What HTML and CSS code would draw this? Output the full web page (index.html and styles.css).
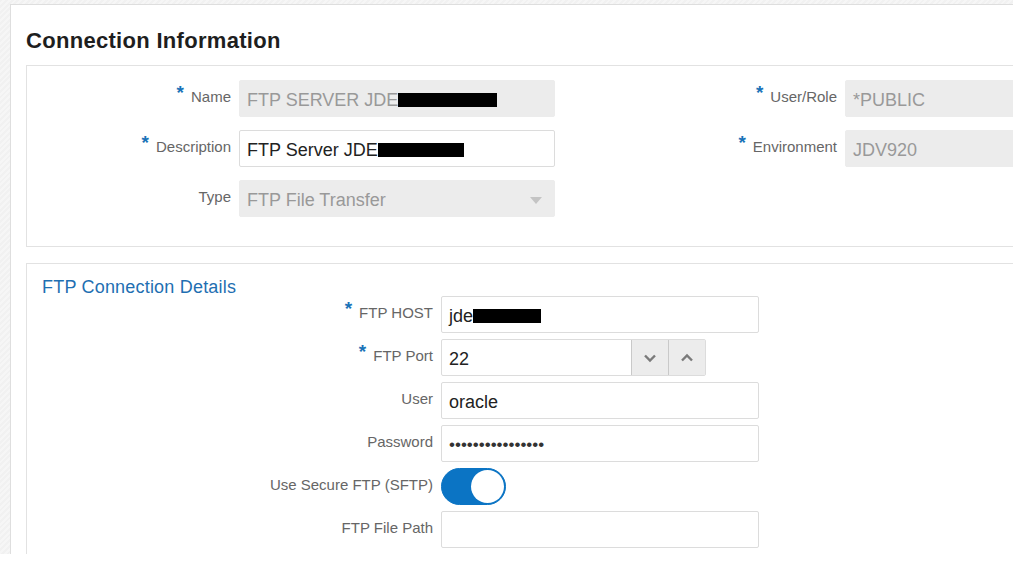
FILE: index.html
```html
<!DOCTYPE html>
<html>
<head>
<meta charset="utf-8">
<link rel="stylesheet" href="styles.css">
</head>
<body>
<div class="frame">
  <div class="outer">
    <h1 class="title">Connection Information</h1>
    <section class="panel panel-info">
      <div class="col col-left">
        <div class="row">
          <label class="lbl"><span class="req">*</span>Name</label>
          <div class="field ro">FTP SERVER JDE<span class="redact r1"></span></div>
        </div>
        <div class="row">
          <label class="lbl"><span class="req">*</span>Description</label>
          <div class="field">FTP Server JDE<span class="redact r2"></span></div>
        </div>
        <div class="row">
          <label class="lbl">Type</label>
          <div class="field ro select">FTP File Transfer<span class="caret"></span></div>
        </div>
      </div>
      <div class="col col-right">
        <div class="row">
          <label class="lbl"><span class="req">*</span>User/Role</label>
          <div class="field ro">*PUBLIC</div>
        </div>
        <div class="row">
          <label class="lbl"><span class="req">*</span>Environment</label>
          <div class="field ro">JDV920</div>
        </div>
      </div>
    </section>
    <section class="panel panel-ftp">
      <h2 class="sub">FTP Connection Details</h2>
      <div class="form">
        <div class="row">
          <label class="lbl"><span class="req">*</span>FTP HOST</label>
          <div class="field">jde<span class="redact r3"></span></div>
        </div>
        <div class="row">
          <label class="lbl"><span class="req">*</span>FTP Port</label>
          <div class="spin">
            <div class="spin-val">22</div>
            <div class="spin-btn">
              <svg width="14" height="10" viewBox="0 0 14 10"><path d="M2 2.5 L7 7.5 L12 2.5" fill="none" stroke="#7a7a7a" stroke-width="2.4"/></svg>
            </div>
            <div class="spin-btn">
              <svg width="14" height="10" viewBox="0 0 14 10"><path d="M2 7.5 L7 2.5 L12 7.5" fill="none" stroke="#7a7a7a" stroke-width="2.4"/></svg>
            </div>
          </div>
        </div>
        <div class="row">
          <label class="lbl">User</label>
          <div class="field">oracle</div>
        </div>
        <div class="row">
          <label class="lbl">Password</label>
          <div class="field pw">&#8226;&#8226;&#8226;&#8226;&#8226;&#8226;&#8226;&#8226;&#8226;&#8226;&#8226;&#8226;&#8226;&#8226;&#8226;&#8226;</div>
        </div>
        <div class="row">
          <label class="lbl">Use Secure FTP (SFTP)</label>
          <div class="toggle"><span class="knob"></span></div>
        </div>
        <div class="row">
          <label class="lbl">FTP File Path</label>
          <div class="field"></div>
        </div>
      </div>
    </section>
  </div>
</div>
</body>
</html>
```
FILE: styles.css
```css
html, body {
  margin: 0;
  padding: 0;
  background: #ffffff;
}
body {
  font-family: "Liberation Sans", Arial, sans-serif;
  width: 1024px;
  height: 577px;
  overflow: hidden;
}
.frame {
  width: 1013px;
  height: 554px;
  box-sizing: border-box;
  padding: 4px 0 0 10px;
  overflow: hidden;
  background: repeating-linear-gradient(135deg, #f1f1f1 0, #f1f1f1 2px, #f6f6f6 2px, #f6f6f6 4px);
}
.outer {
  height: 100%;
  background: #fff;
  border-left: 1px solid #dedede;
  border-top: 1px solid #dedede;
  padding-left: 15px;
  box-sizing: border-box;
}
.title {
  margin: 0;
  padding-top: 23px;
  height: 36px;
  box-sizing: border-box;
  font-size: 22px;
  line-height: 26px;
  letter-spacing: 0.3px;
  font-weight: bold;
  color: #1e1e1e;
  white-space: nowrap;
}
.panel {
  border: 1px solid #e2e2e2;
  border-right: none;
  background: #fff;
}
.panel-info {
  margin-top: 24px;
  height: 182px;
  box-sizing: border-box;
  display: flex;
  padding-top: 14px;
}
.col {
  display: flex;
  flex-direction: column;
  gap: 13px;
}
.col-left { width: 528px; }
.col-left .lbl { width: 204px; }
.col-right .lbl { width: 282px; }
.row {
  display: flex;
  align-items: center;
  gap: 8px;
}
.lbl {
  flex: none;
  text-align: right;
  font-size: 15px;
  color: #666;
  margin-top: -5px;
  white-space: nowrap;
}
.req {
  color: #1a73b8;
  font-size: 19px;
  font-weight: bold;
  position: relative;
  top: -3px;
  margin-right: 7px;
}
.field {
  flex: none;
  width: 316px;
  height: 37px;
  box-sizing: border-box;
  border: 1px solid #dcdcdc;
  border-radius: 2px;
  background: #fff;
  padding: 8px 7px 0 7px;
  font-size: 18px;
  line-height: 22px;
  color: #222;
  white-space: nowrap;
  position: relative;
}
.field.ro {
  background: #ececec;
  border-color: #ececec;
  color: #999;
}
.redact {
  display: inline-block;
  background: #000;
  height: 14px;
  vertical-align: -1px;
}
.r1 { width: 99px; }
.r2 { width: 86px; }
.r3 { width: 68px; }
.caret {
  position: absolute;
  right: 12px;
  top: 16px;
  width: 0;
  height: 0;
  border-left: 6px solid transparent;
  border-right: 6px solid transparent;
  border-top: 7px solid #c4c4c4;
}
.panel-ftp {
  margin-top: 16px;
  height: 400px;
}
.sub {
  margin: 0;
  padding: 14px 0 0 15px;
  font-size: 18px;
  line-height: 18px;
  letter-spacing: 0.2px;
  font-weight: normal;
  color: #1f6fb2;
  white-space: nowrap;
}
.form {
  display: flex;
  flex-direction: column;
  gap: 6px;
}
.form .lbl { width: 406px; }
.form .field { width: 318px; }
.spin {
  display: flex;
  width: 265px;
  height: 37px;
  box-sizing: border-box;
  border: 1px solid #dcdcdc;
  border-radius: 2px;
}
.spin-val {
  flex: 1;
  padding: 8px 7px 0 7px;
  font-size: 18px;
  line-height: 22px;
  color: #222;
}
.spin-btn {
  width: 36px;
  background: #ececec;
  border-left: 1px solid #c9c9c9;
  display: flex;
  align-items: center;
  justify-content: center;
}
.pw {
  font-size: 17px;
  padding-top: 8px;
  color: #333;
}
.toggle {
  width: 65px;
  height: 37px;
  box-sizing: border-box;
  border-radius: 19px;
  background: #0b74c4;
  border: 1px solid #0b74c4;
  display: flex;
  justify-content: flex-end;
  align-items: center;
  padding-right: 1px;
}
.knob {
  width: 33px;
  height: 33px;
  border-radius: 50%;
  background: #fff;
}
```
